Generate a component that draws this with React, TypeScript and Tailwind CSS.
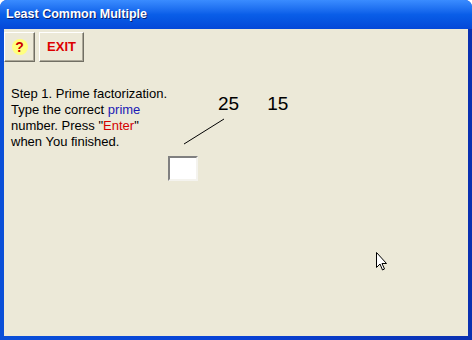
import React from 'react';

const App: React.FC = () => {
  return (
    <div
      className="w-[472px] h-[340px] flex flex-col bg-[#0842d6] rounded-t-[7px] overflow-hidden"
      style={{ fontFamily: '"Liberation Sans", Arial, sans-serif' }}
    >
      {/* Title bar */}
      <div className="h-[29px] shrink-0 flex items-center px-[6px] bg-gradient-to-b from-[#3a8cff] via-[#0a5ee8] to-[#0548d8]">
        <span className="text-white font-bold text-[12.5px] [text-shadow:1px_1px_0_#0a1f6e]">
          Least Common Multiple
        </span>
      </div>

      {/* Window body */}
      <div className="flex-1 flex flex-col px-[4px] pb-[4px] bg-gradient-to-r from-[#0a4fd8] via-[#0842d6] to-[#0a30b0]">
        <div className="flex-1 relative bg-[#ece9d8] border-t border-[#ece9d8]">
          {/* Toolbar */}
          <div className="flex gap-[4px] pt-[2px]">
            <button className="w-[31px] h-[30px] flex items-center justify-center bg-[#ece9d8] border border-t-white border-l-white border-r-[#716f64] border-b-[#716f64] shadow-[inset_-1px_-1px_0_#aca899]">
              <span className="w-[16px] h-[16px] rounded-full bg-[#ffff80] flex items-center justify-center text-[#cc0000] font-bold text-[14px] leading-none">
                ?
              </span>
            </button>
            <button className="w-[45px] h-[30px] flex items-center justify-center bg-[#ece9d8] border border-t-white border-l-white border-r-[#716f64] border-b-[#716f64] shadow-[inset_-1px_-1px_0_#aca899] text-[#dd0000] font-bold text-[13px]">
              EXIT
            </button>
          </div>

          {/* Content */}
          <div className="flex pt-[24px] pl-[7px]">
            <div className="w-[157px] text-[13px] leading-[16px] text-black whitespace-nowrap">
              <p>Step 1. Prime factorization.</p>
              <p>
                Type the correct <span className="text-[#1a1ab4]">prime</span>
              </p>
              <p>
                number. Press "<span className="text-[#d40000]">Enter</span>"
              </p>
              <p>when You finished.</p>
            </div>

            <div className="flex flex-col mt-[7px]">
              <div className="flex gap-[28px] pl-[50px] text-[19px] leading-[22px] text-black">
                <span>25</span>
                <span>15</span>
              </div>
              <svg width="60" height="30" className="ml-[14px] mt-[1px]" viewBox="0 0 60 30">
                <line x1="2" y1="28" x2="42" y2="3" stroke="#000" strokeWidth="1" />
              </svg>
              <input
                type="text"
                className="w-[30px] h-[25px] mt-[10px] bg-white border-2 border-t-[#808080] border-l-[#808080] border-r-[#f4f3ee] border-b-[#f4f3ee] outline-none"
              />
            </div>
          </div>

          {/* Mouse cursor */}
          <svg className="absolute left-[372px] top-[222px]" width="12" height="20" viewBox="0 0 12 20">
            <path
              d="M0.5 0.5 L0.5 15.5 L4 12 L6.5 18 L8.5 17 L6 11.5 L10.5 11.5 Z"
              fill="#fff"
              stroke="#000"
              strokeWidth="1"
            />
          </svg>
        </div>
      </div>
    </div>
  );
};

export default App;
